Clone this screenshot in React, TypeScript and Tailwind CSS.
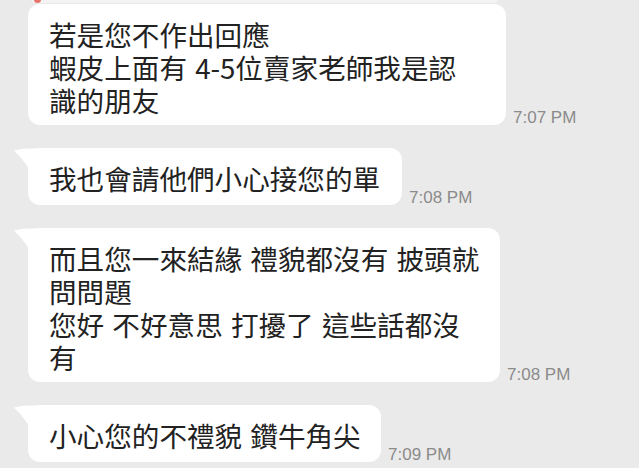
import React from "react";

const Tail = () => (
  <svg
    className="absolute left-[-14px] top-0"
    width="28"
    height="24"
    viewBox="0 0 28 24"
  >
    <path d="M0 2.5 Q8 0.5 14 0.5 L28 0.5 L28 24 L14 24 L14 19 Q7 9 0 2.5 Z" fill="#ffffff" />
  </svg>
);

type Msg = { lines: string[]; time: string; width: number; tail: boolean };

const msgs: Msg[] = [
  {
    lines: ["若是您不作出回應", "蝦皮上面有 4-5位賣家老師我是認", "識的朋友"],
    time: "7:07 PM",
    width: 478,
    tail: false,
  },
  { lines: ["我也會請他們小心接您的單"], time: "7:08 PM", width: 374, tail: true },
  {
    lines: ["而且您一來結緣 禮貌都沒有 披頭就", "問問題", "您好 不好意思 打擾了 這些話都沒", "有"],
    time: "7:08 PM",
    width: 472,
    tail: true,
  },
  { lines: ["小心您的不禮貌 鑽牛角尖"], time: "7:09 PM", width: 353, tail: true },
];

export default function App() {
  return (
    <div className="w-[639px] h-[468px] overflow-hidden bg-[#eaeaea] flex flex-col pl-[28px]">
      <div className="relative ml-[4px] w-[465px] h-[3px] bg-[#f3f3f3] rounded-b-[3px]">
        <div className="absolute left-[2px] top-[-4px] w-[7px] h-[7px] rounded-full bg-[#e8736a]" />
      </div>
      <div className="flex flex-col gap-[23px] mt-[1px]">
        {msgs.map((m, i) => (
          <div key={i} className="flex items-end">
            <div
              className="relative bg-white rounded-[12px] pl-[21px] pt-[14px] pb-[8px] min-h-[57px] shrink-0"
              style={{ width: m.width }}
            >
              {m.tail && <Tail />}
              <div
                className="relative text-[27.6px] leading-[33px] text-[#222222] whitespace-nowrap [word-spacing:2px]"
                style={{ fontFamily: '"Noto Sans CJK TC", "Noto Sans", sans-serif' }}
              >
                {m.lines.map((l, j) => (
                  <div key={j}>{l}</div>
                ))}
              </div>
            </div>
            <div
              className="ml-[7px] mb-[-1px] text-[17px] leading-[17px] text-[#8b8b8b] whitespace-nowrap"
              style={{ fontFamily: '"Liberation Sans", Arial, sans-serif' }}
            >
              {m.time}
            </div>
          </div>
        ))}
      </div>
    </div>
  );
}
